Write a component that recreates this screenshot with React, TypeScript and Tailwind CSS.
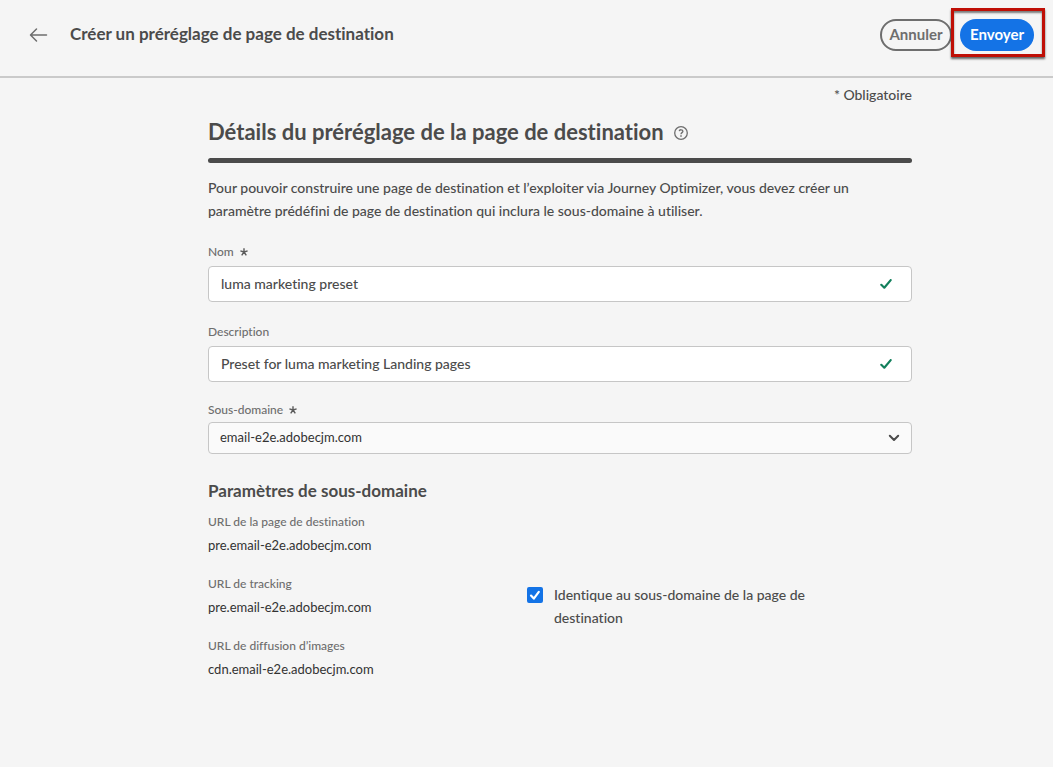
import { useState } from "react";
import type { ReactNode } from "react";

function Asterisk() {
  return (
    <svg viewBox="0 0 8 8" className="h-2 w-2 text-[#5a5a5a]" fill="none" stroke="currentColor" strokeWidth="1.4" aria-hidden="true">
      <path d="M4 4V0.2M4 4L0.4 2.9M4 4L7.6 2.9M4 4L1.7 7.3M4 4L6.3 7.3" />
    </svg>
  );
}

function FieldLabel({ htmlFor, required, children }: { htmlFor: string; required?: boolean; children: ReactNode }) {
  return (
    <label htmlFor={htmlFor} className="flex items-center gap-1.5 text-[12px] leading-4 font-medium text-[#6e6e6e]">
      {children}
      {required && <Asterisk />}
    </label>
  );
}

function ValidField({ id, value, onChange }: { id: string; value: string; onChange: (value: string) => void }) {
  return (
    <div className="relative mt-1.5">
      <input
        id={id}
        type="text"
        value={value}
        onChange={(e) => onChange(e.target.value)}
        className="block h-9 w-full rounded border border-[#c6c6c6] bg-white pr-12 pb-0.5 pl-3 text-[14px] font-medium text-[#4b4b4b] outline-none"
      />
      <svg viewBox="0 0 12 10" className="absolute top-[13px] right-5 h-[10px] w-3" fill="none" stroke="#12805c" strokeWidth="2.2" strokeLinecap="round" strokeLinejoin="round" aria-hidden="true">
        <path d="M1.3 5.8L4.3 8.7L10.7 1.1" />
      </svg>
    </div>
  );
}

function Detail({ label, value }: { label: string; value: string }) {
  return (
    <div>
      <dt className="text-[12px] leading-5 font-medium text-[#6e6e6e]">{label}</dt>
      <dd className="mt-1 text-[13px] leading-[18px] text-[#323232]">{value}</dd>
    </div>
  );
}

export default function App() {
  const [name, setName] = useState("luma marketing preset");
  const [description, setDescription] = useState("Preset for luma marketing Landing pages");
  const [same, setSame] = useState(true);

  return (
    <div className="min-h-screen bg-[#f5f5f5] font-['Lato','Noto_Sans',sans-serif] text-[#4b4b4b] [font-variant-ligatures:none]">
      <header className="flex h-[78px] items-start border-b-2 border-[#cacaca] pt-[19px] pr-[19px] pl-[29px]">
        <button type="button" aria-label="Retour" className="flex h-8 w-5 items-center">
          <svg viewBox="0 0 20 16" className="h-4 w-5" fill="none" stroke="#6e6e6e" strokeWidth="1.5" strokeLinecap="round" strokeLinejoin="round" aria-hidden="true">
            <path d="M17.5 8H2M7.5 2L1.5 8L7.5 14" />
          </svg>
        </button>
        <h1 className="ml-[21px] text-[17px] leading-[30px] font-bold">Créer un préréglage de page de destination</h1>
        <div className="ml-auto flex gap-2">
          <button type="button" className="h-8 w-[72px] rounded-full border-2 border-[#6e6e6e] pb-0.5 text-[15px] leading-[26px] font-bold text-[#6e6e6e]">
            Annuler
          </button>
          <div className="relative">
            <button type="button" className="h-8 w-[74px] rounded-full bg-[#1473e6] pb-0.5 text-[15px] leading-[30px] font-bold text-white">
              Envoyer
            </button>
            <div className="pointer-events-none absolute -top-[11px] -right-[11px] -bottom-[6px] -left-[9px] border-[3px] border-[#bf0f06] shadow-[0_2px_2px_rgba(0,0,0,0.6),inset_0_2px_2px_rgba(0,0,0,0.5)]" />
          </div>
        </div>
      </header>

      <main className="pt-[7px] pr-[141px] pb-10 pl-[208px]">
        <p className="text-right text-[14px] leading-5 font-medium">* Obligatoire</p>

        <div className="mt-3 flex items-center gap-[10px]">
          <h2 className="text-[22px] leading-[30px] font-bold">Détails du préréglage de la page de destination</h2>
          <button type="button" aria-label="Aide" className="mt-0.5 h-[14px] w-[14px]">
            <svg viewBox="0 0 14 14" className="h-[14px] w-[14px]" fill="none" stroke="#6e6e6e" strokeWidth="1.3" aria-hidden="true">
              <circle cx="7" cy="7" r="6.3" />
              <path d="M5.2 5.1C5.4 3.3 8.9 3.3 8.9 5.3C8.9 6.6 7 6.7 7 8.3" />
              <path d="M7 9.3V10.8" strokeWidth="1.5" />
            </svg>
          </button>
        </div>
        <div className="mt-[11px] h-[5px] rounded-full bg-[#4b4b4b]" />

        <p className="mt-[13px] pr-10 text-[14px] leading-[23px] font-medium">
          Pour pouvoir construire une page de destination et l’exploiter via Journey Optimizer, vous devez créer un paramètre prédéfini de page de destination qui inclura le sous-domaine à utiliser.
        </p>

        <div className="mt-[22px]">
          <FieldLabel htmlFor="name" required>Nom</FieldLabel>
          <ValidField id="name" value={name} onChange={setName} />
        </div>
        <div className="mt-[22px]">
          <FieldLabel htmlFor="description">Description</FieldLabel>
          <ValidField id="description" value={description} onChange={setDescription} />
        </div>
        <div className="mt-5">
          <FieldLabel htmlFor="subdomain" required>Sous-domaine</FieldLabel>
          <div className="relative mt-1">
            <select id="subdomain" className="block h-8 w-full appearance-none rounded border border-[#c6c6c6] bg-[#fafafa] pr-10 pl-[11px] text-[13px] text-[#323232] outline-none">
              <option>email-e2e.adobecjm.com</option>
            </select>
            <svg viewBox="0 0 12 8" className="pointer-events-none absolute top-3 right-3 h-2 w-3" fill="none" stroke="#4b4b4b" strokeWidth="2" strokeLinecap="round" strokeLinejoin="round" aria-hidden="true">
              <path d="M1.8 1.8L6 6L10.2 1.8" />
            </svg>
          </div>
        </div>

        <h3 className="mt-[26px] text-[17px] leading-[22px] font-bold">Paramètres de sous-domaine</h3>
        <div className="mt-[10px] grid grid-cols-[319px_1fr]">
          <dl className="flex flex-col gap-5">
            <Detail label="URL de la page de destination" value="pre.email-e2e.adobecjm.com" />
            <Detail label="URL de tracking" value="pre.email-e2e.adobecjm.com" />
            <Detail label="URL de diffusion d’images" value="cdn.email-e2e.adobecjm.com" />
          </dl>
          <label className="mt-[71px] flex max-w-[300px] items-start gap-[11px] self-start text-[14px] leading-[23px] font-medium">
            <span className="relative mt-[4px] h-4 w-4 shrink-0">
              <input
                type="checkbox"
                checked={same}
                onChange={(e) => setSame(e.target.checked)}
                className="block h-4 w-4 appearance-none rounded-[2px] border-2 border-[#6e6e6e] checked:border-[#1473e6] checked:bg-[#1473e6]"
              />
              {same && (
                <svg viewBox="0 0 16 16" className="pointer-events-none absolute inset-0 h-4 w-4" fill="none" stroke="#ffffff" strokeWidth="2.2" strokeLinecap="round" strokeLinejoin="round" aria-hidden="true">
                  <path d="M4 8.6L6.8 11.6L11.8 4.9" />
                </svg>
              )}
            </span>
            Identique au sous-domaine de la page de destination
          </label>
        </div>
      </main>
    </div>
  );
}
